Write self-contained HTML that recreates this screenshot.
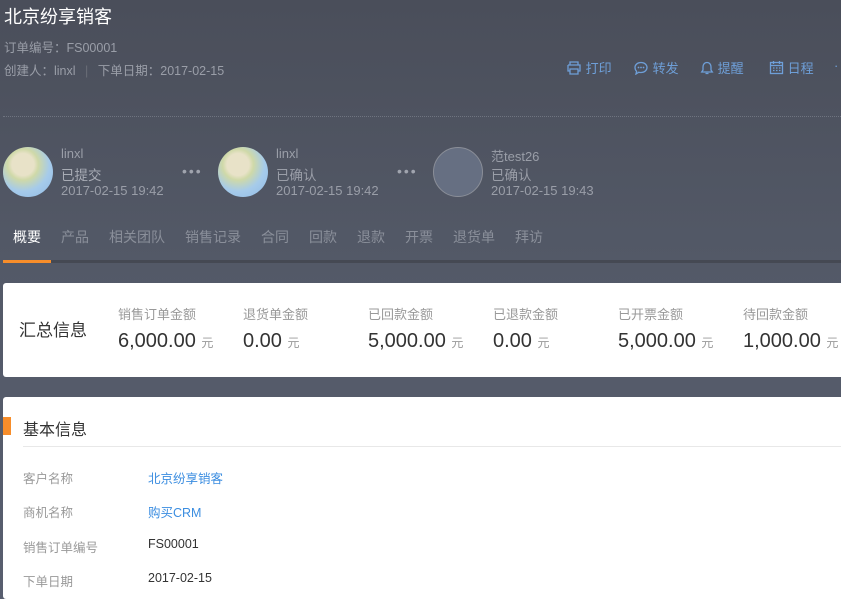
<!DOCTYPE html>
<html style="overflow:hidden;width:841px;height:599px"><head><meta charset="utf-8"><style>
*{margin:0;padding:0;box-sizing:border-box}
body{width:841px;height:599px;overflow:hidden;font-family:"Liberation Sans","Noto Sans CJK SC",sans-serif;background:linear-gradient(#4a4e5a 0px,#535967 260px,#585e6f 599px);position:relative;color:#999}
.a{position:absolute;white-space:nowrap}
.t1{font-size:18px;color:#fff;left:4px;top:3px}
.g{font-size:12.5px;color:#9a9ea8}
.act{font-size:13px;color:#6e9fd8;top:58px}
.av{position:absolute;width:50px;height:50px;border-radius:50%;top:147px;background:radial-gradient(circle at 40% 35%,#e8e2c8 0 25%,#cfd9a8 35%,#a6cbea 60%,#8fb9e6 100%)}
.st{font-size:13px;color:#9a9ea8}
.dots{font-size:14px;color:#a0a4ae;letter-spacing:2px}
.tab{font-size:14px;color:#8a8f9a;top:227px}
.card{position:absolute;left:3px;width:838px;background:#fff;border-radius:3px 0 0 3px}
.lab{font-size:13px;color:#999;top:304px}
.num{font-size:20px;color:#333;top:330px}
.num small{font-size:12px;color:#999}
.k{font-size:12.5px;color:#999;left:23px}
.v{font-size:12.5px;left:148px;color:#333}
</style></head><body>
<div class="a t1">北京纷享销客</div>
<div class="a g" style="left:4px;top:37px">订单编号：FS00001</div>
<div class="a g" style="left:4px;top:60px">创建人：linxl <span style="color:#6a6e78;margin:0 6px">|</span> 下单日期：2017-02-15</div>
<div class="a act" style="left:566px"><svg width="16" height="14" viewBox="0 0 16 14" style="vertical-align:-2px"><path d="M4 4V1h8v3M2 4h12v6h-2M4 10H2V4M4 8h8v5H4z" fill="none" stroke="#6e9fd8" stroke-width="1.3"/></svg> 打印</div>
<div class="a act" style="left:633px"><svg width="16" height="14" viewBox="0 0 16 14" style="vertical-align:-2px"><path d="M8 1.5c3.6 0 6 2.2 6 5s-2.4 5-6 5c-.8 0-1.5-.1-2.2-.3L3 13l.6-2.7C2.6 9.4 2 8 2 6.5c0-2.8 2.4-5 6-5z" fill="none" stroke="#6e9fd8" stroke-width="1.3"/><circle cx="5.5" cy="6.5" r=".9" fill="#6e9fd8"/><circle cx="8" cy="6.5" r=".9" fill="#6e9fd8"/><circle cx="10.5" cy="6.5" r=".9" fill="#6e9fd8"/></svg> 转发</div>
<div class="a act" style="left:700px"><svg width="14" height="14" viewBox="0 0 14 14" style="vertical-align:-2px"><path d="M7 1.5c-2.5 0-4 2-4 4.5V9l-1.3 2h10.6L11 9V6c0-2.5-1.5-4.5-4-4.5zM5.5 12.5h3" fill="none" stroke="#6e9fd8" stroke-width="1.3"/></svg> 提醒</div>
<div class="a act" style="left:769px"><svg width="15" height="15" viewBox="0 0 15 15" style="vertical-align:-2px"><rect x="1.5" y="2.5" width="12" height="11" fill="none" stroke="#6e9fd8" stroke-width="1.3"/><path d="M1.5 5.5h12M4.5 1v3M10.5 1v3" stroke="#6e9fd8" stroke-width="1.3"/><path d="M4 8h1.5M7 8h1.5M10 8h1.5M4 10.5h1.5M7 10.5h1.5M10 10.5h1.5" stroke="#6e9fd8" stroke-width="1.2"/></svg> 日程</div>
<div class="a act" style="left:834px">·</div>
<div class="a" style="left:3px;right:0;top:116px;border-top:1px dotted #6f7480"></div>
<div class="av" style="left:3px"></div>
<div class="a st" style="left:61px;top:146px">linxl</div>
<div class="a st" style="left:61px;top:164px;font-size:13.5px;color:#a8acb5">已提交</div>
<div class="a st" style="left:61px;top:183px">2017-02-15 19:42</div>
<div class="a dots" style="left:182px;top:163px">•••</div>
<div class="av" style="left:218px"></div>
<div class="a st" style="left:276px;top:146px">linxl</div>
<div class="a st" style="left:276px;top:164px;font-size:13.5px">已确认</div>
<div class="a st" style="left:276px;top:183px">2017-02-15 19:42</div>
<div class="a dots" style="left:397px;top:163px">•••</div>
<div class="av" style="left:433px;background:#666f82;border:1px solid #8a8e98"></div>
<div class="a st" style="left:491px;top:146px">范test26</div>
<div class="a st" style="left:491px;top:164px;font-size:13.5px">已确认</div>
<div class="a st" style="left:491px;top:183px">2017-02-15 19:43</div>
<div class="a tab" style="left:13px;color:#fff">概要</div>
<div class="a tab" style="left:61px">产品</div>
<div class="a tab" style="left:109px">相关团队</div>
<div class="a tab" style="left:185px">销售记录</div>
<div class="a tab" style="left:261px">合同</div>
<div class="a tab" style="left:309px">回款</div>
<div class="a tab" style="left:357px">退款</div>
<div class="a tab" style="left:405px">开票</div>
<div class="a tab" style="left:453px">退货单</div>
<div class="a tab" style="left:515px">拜访</div>
<div class="a" style="left:3px;right:0;top:260px;height:3px;background:#454953"></div>
<div class="a" style="left:3px;width:48px;top:260px;height:3px;background:#f78d2a"></div>
<div class="card" style="top:283px;height:94px"></div>
<div class="a" style="left:19px;top:316px;font-size:17px;color:#333">汇总信息</div>
<div class="a lab" style="left:118px">销售订单金额</div><div class="a num" style="left:118px">6,000.00 <small>元</small></div>
<div class="a lab" style="left:243px">退货单金额</div><div class="a num" style="left:243px">0.00 <small>元</small></div>
<div class="a lab" style="left:368px">已回款金额</div><div class="a num" style="left:368px">5,000.00 <small>元</small></div>
<div class="a lab" style="left:493px">已退款金额</div><div class="a num" style="left:493px">0.00 <small>元</small></div>
<div class="a lab" style="left:618px">已开票金额</div><div class="a num" style="left:618px">5,000.00 <small>元</small></div>
<div class="a lab" style="left:743px">待回款金额</div><div class="a num" style="left:743px">1,000.00 <small>元</small></div>
<div class="card" style="top:397px;height:202px"></div>
<div class="a" style="left:3px;top:417px;width:8px;height:18px;background:#f78d2a"></div>
<div class="a" style="left:23px;top:416px;font-size:16px;color:#333">基本信息</div>
<div class="a" style="left:23px;right:0;top:446px;border-top:1px solid #e8e8e8"></div>
<div class="a k" style="top:468px">客户名称</div><div class="a v" style="top:468px;color:#3b8de0">北京纷享销客</div>
<div class="a k" style="top:502px">商机名称</div><div class="a v" style="top:502px;color:#3b8de0">购买CRM</div>
<div class="a k" style="top:537px">销售订单编号</div><div class="a v" style="top:537px">FS00001</div>
<div class="a k" style="top:571px">下单日期</div><div class="a v" style="top:571px">2017-02-15</div>
</body></html>
